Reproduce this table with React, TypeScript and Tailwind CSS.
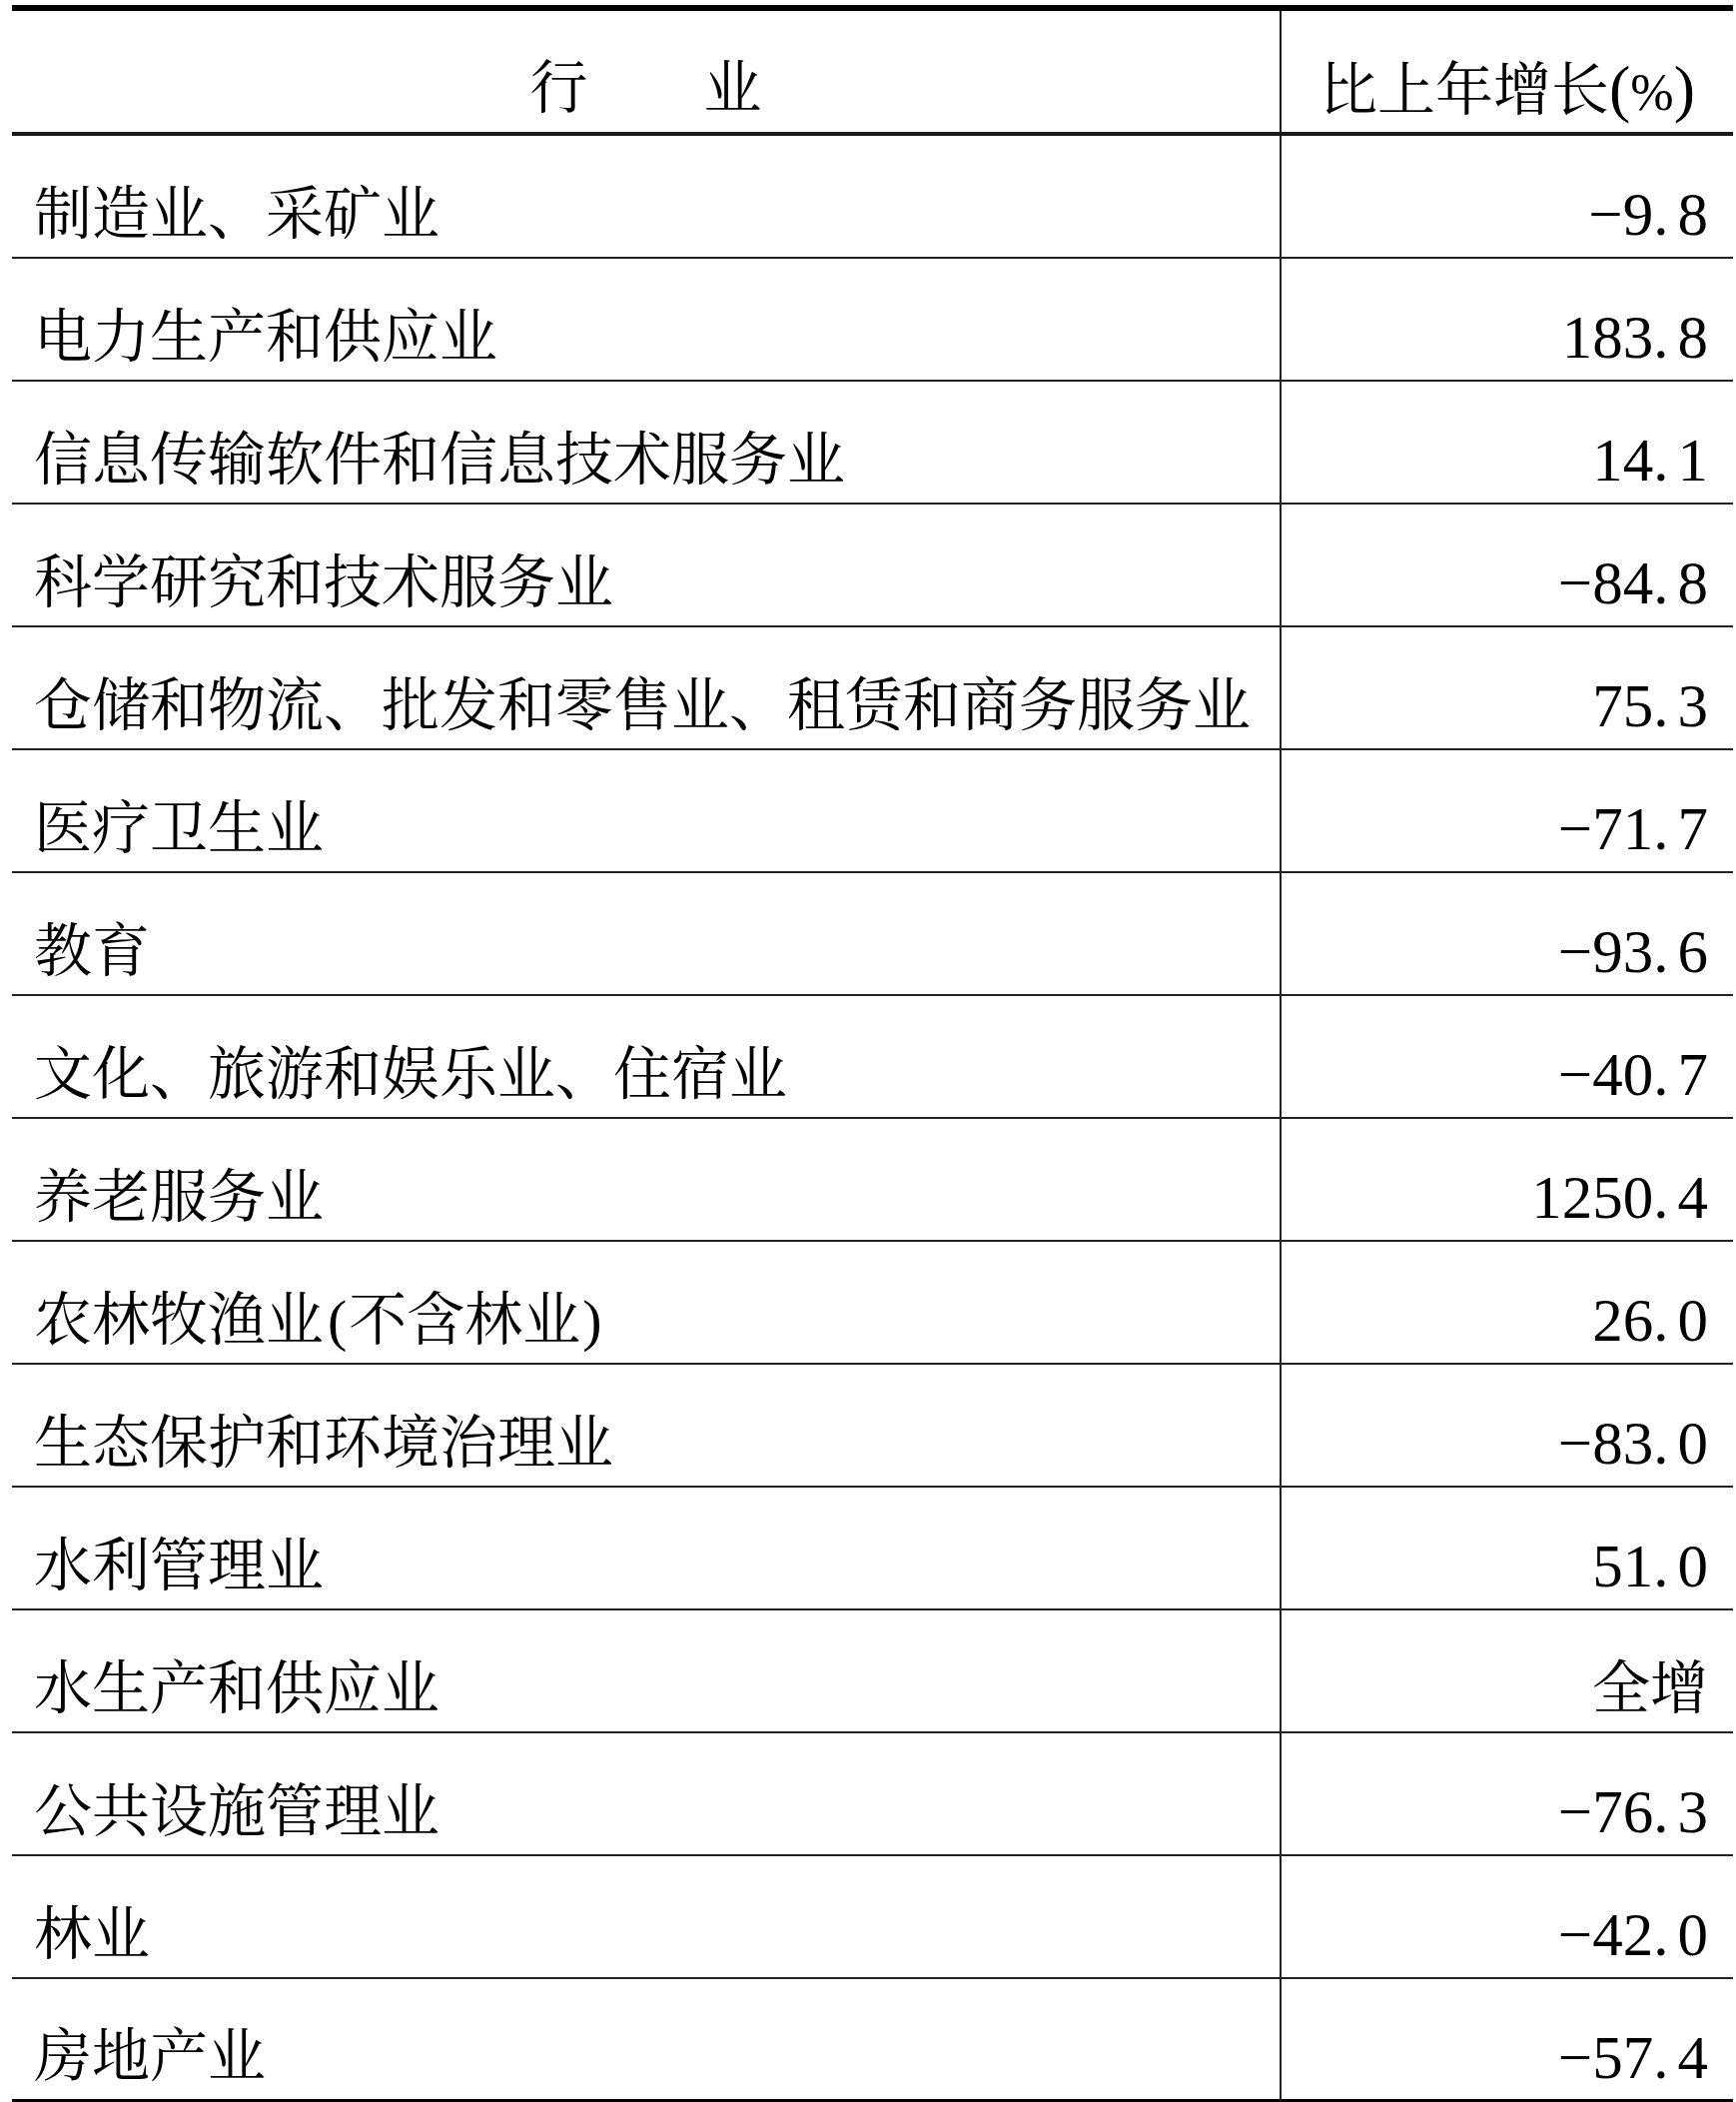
const rows: [string, string][] = [
  ["制造业、采矿业", "−9.8"],
  ["电力生产和供应业", "183.8"],
  ["信息传输软件和信息技术服务业", "14.1"],
  ["科学研究和技术服务业", "−84.8"],
  ["仓储和物流、批发和零售业、租赁和商务服务业", "75.3"],
  ["医疗卫生业", "−71.7"],
  ["教育", "−93.6"],
  ["文化、旅游和娱乐业、住宿业", "−40.7"],
  ["养老服务业", "1250.4"],
  ["农林牧渔业(不含林业)", "26.0"],
  ["生态保护和环境治理业", "−83.0"],
  ["水利管理业", "51.0"],
  ["水生产和供应业", "全增"],
  ["公共设施管理业", "−76.3"],
  ["林业", "−42.0"],
  ["房地产业", "−57.4"],
];

const font = {
  fontFamily:
    '"Liberation Serif", "Noto Serif CJK SC", "Noto Sans CJK SC", serif',
};

// "−9.8" -> "−9" + wide dot + "8"
const Value = ({ v }: { v: string }) => {
  const i = v.indexOf(".");
  if (i < 0) return <span className="text-[58px]">{v}</span>;
  return (
    <span className="text-[61px]">
      {v.slice(0, i)}
      <span className="mr-[9px]">.</span>
      {v.slice(i + 1)}
    </span>
  );
};

// parens a bit apart, like the source's wide brackets
const Name = ({ s }: { s: string }) => {
  const parts = s.split(/([()])/);
  return (
    <span>
      {parts.map((p, i) =>
        p === "(" ? (
          <span key={i} className="ml-[4px] mr-[2px]">(</span>
        ) : p === ")" ? (
          <span key={i} className="ml-[2px]">)</span>
        ) : (
          <span key={i}>{p}</span>
        )
      )}
    </span>
  );
};

export default function App() {
  return (
    <div className="w-[1738px] h-[2104px] overflow-hidden bg-white pl-[12px] pr-[3px] pt-[5px] text-black" style={font}>
      <div className="grid grid-cols-[1271px_1fr] border-t-[6px] border-black">
        {/* header */}
        <div className="h-[125px] border-b-[4px] border-r-2 border-[#1a1a1a] pt-[35px] flex items-center justify-center text-[58px] leading-none">
          <span>行　　业</span>
        </div>
        <div className="h-[125px] border-b-[4px] border-[#1a1a1a] pt-[35px] flex items-center justify-center text-[58px] leading-none">
          <span>
            比上年增长<span className="text-[64px]">(</span>
            <span className="text-[52px]">%</span>
            <span className="text-[64px]">)</span>
          </span>
        </div>

        {/* body */}
        {rows.map(([name, val], idx) => {
          const last = idx === rows.length - 1;
          return (
            <div key={name} className="contents">
              <div
                className={`h-[123px] border-r-2 border-[#222] pt-[36px] pl-[22px] flex items-center text-[58px] leading-none whitespace-nowrap ${
                  last ? "border-b-[3px] border-b-black" : "border-b-2"
                }`}
              >
                <Name s={name} />
              </div>
              <div
                className={`h-[123px] border-[#222] pt-[36px] pr-[25px] flex items-center justify-end leading-none whitespace-nowrap ${
                  last ? "border-b-[3px] border-b-black" : "border-b-2"
                }`}
              >
                <Value v={val} />
              </div>
            </div>
          );
        })}
      </div>
    </div>
  );
}
